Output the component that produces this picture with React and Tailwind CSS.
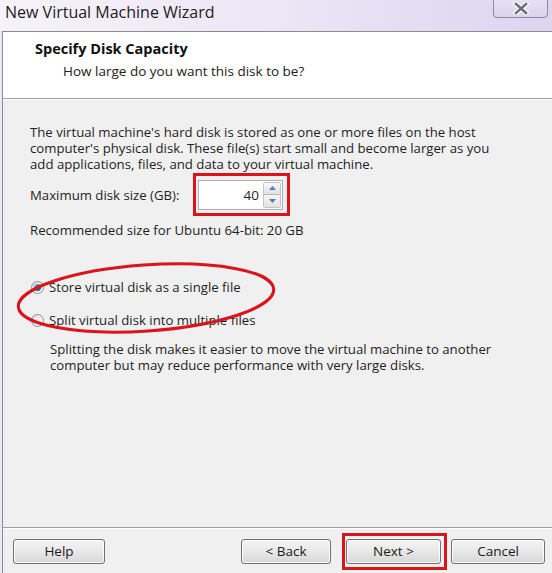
import React from 'react';

const font = { fontFamily: '"Open Sans", "Noto Sans", sans-serif' };

function WinButton({ children, className = '' }) {
  return (
    <div
      className={`h-[25px] flex items-center justify-center rounded-[3px] border border-[#707070] bg-gradient-to-b from-[#f4f4f4] via-[#e8e8e8] to-[#d6d6d6] text-[13.5px] text-[#1a1a1a] shadow-[inset_0_0_0_1px_#fcfcfc] ${className}`}
    >
      {children}
    </div>
  );
}

function Radio({ checked }) {
  return (
    <div className="w-[13px] h-[13px] rounded-full border border-[#8e8f8f] bg-gradient-to-br from-[#dcdcdc] to-[#fbfbfb] flex items-center justify-center">
      {checked && (
        <div className="w-[7px] h-[7px] rounded-full bg-gradient-to-br from-[#8cc3ec] via-[#2c6fb3] to-[#1b4f8a]" />
      )}
    </div>
  );
}

function CloseButton() {
  return (
    <div className="w-[55px] h-[19px] mt-[-1px] mr-[4px] rounded-b-[4px] border border-[#8d8aa6] bg-gradient-to-b from-[#e6e2f4] to-[#d9d3ee] flex items-center justify-center">
      <svg width="16" height="13" viewBox="0 0 16 13">
        <path d="M3 2 L13 11 M13 2 L3 11" stroke="#ffffff" strokeWidth="5" strokeLinecap="square" />
        <path d="M3 2 L13 11 M13 2 L3 11" stroke="#6f6f7c" strokeWidth="2.6" strokeLinecap="square" />
      </svg>
    </div>
  );
}

export default function App() {
  return (
    <div className="w-[552px] h-[573px] overflow-hidden bg-[#ece8f6] flex flex-col" style={font}>
      {/* title bar */}
      <div className="h-[31px] shrink-0 flex items-start justify-between bg-gradient-to-r from-[#f6f2f9] via-[#ece6f6] to-[#dcd5f0]">
        <div className="pl-[5px] pt-[1px] text-[16px] leading-[22px] text-[#1c1c1c]">New Virtual Machine Wizard</div>
        <CloseButton />
      </div>

      {/* window */}
      <div className="flex-1 ml-[2px] border-l border-t border-[#8c8c8c] flex flex-col bg-[#f0f0f0]">
        {/* header */}
        <div className="h-[67px] shrink-0 bg-white border-b border-[#a0a0a0] pl-[32px] pt-[8px]">
          <div className="text-[14.5px] leading-[18px] font-bold text-[#111]">Specify Disk Capacity</div>
          <div className="pl-[28px] mt-[4px] text-[13.5px] leading-[18px] text-[#222]">How large do you want this disk to be?</div>
        </div>

        {/* body */}
        <div className="relative flex-1 border-t border-white pl-[27px] pt-[24px] text-[13.2px] leading-[16px] text-[#1e1e1e] whitespace-nowrap">
          <p>
            The virtual machine's hard disk is stored as one or more files on the host
            <br />
            computer's physical disk. These file(s) start small and become larger as you
            <br />
            add applications, files, and data to your virtual machine.
          </p>

          <div className="flex items-center mt-[1px]">
            <span className="w-[163px]">Maximum disk size (GB):</span>
            <div className="w-[97px] h-[43px] border-[3px] border-[#d9141b] flex items-center pl-[2px]">
              <div className="w-[85px] h-[30px] flex border border-[#abadb3] bg-white">
                <div className="flex-1 flex items-center justify-end pr-[4px] text-[13.5px]">40</div>
                <div className="w-[18px] my-[1px] mr-[1px] flex flex-col border border-[#c4c4c4] rounded-[2px]">
                  <div className="flex-1 flex items-center justify-center bg-gradient-to-b from-[#f6f6f6] to-[#e2e2e2] border-b border-[#b8b8b8]">
                    <svg width="7" height="4" viewBox="0 0 7 4"><path d="M0 4 L3.5 0 L7 4 Z" fill="#4f7fb8" /></svg>
                  </div>
                  <div className="flex-1 flex items-center justify-center bg-gradient-to-b from-[#f6f6f6] to-[#e2e2e2]">
                    <svg width="7" height="4" viewBox="0 0 7 4"><path d="M0 0 L3.5 4 L7 0 Z" fill="#4f7fb8" /></svg>
                  </div>
                </div>
              </div>
            </div>
          </div>

          <p className="mt-[6px]">Recommended size for Ubuntu 64-bit: 20 GB</p>

          <div className="flex items-center gap-[5px] mt-[41px] pl-[1px]">
            <Radio checked />
            <span>Store virtual disk as a single file</span>
          </div>
          <div className="flex items-center gap-[5px] mt-[17px] pl-[1px]">
            <Radio />
            <span>Split virtual disk into multiple files</span>
          </div>
          <p className="mt-[13px] pl-[20px]">
            Splitting the disk makes it easier to move the virtual machine to another
            <br />
            computer but may reduce performance with very large disks.
          </p>

          {/* red annotation ellipse */}
          <svg className="absolute left-[8px] top-[158px] pointer-events-none" width="275" height="84" viewBox="0 0 275 84">
            <ellipse cx="135" cy="40" rx="128" ry="33" transform="rotate(-4 135 40)" fill="none" stroke="#d9141b" strokeWidth="3" />
          </svg>
        </div>

        {/* footer */}
        <div className="h-[46px] shrink-0 border-t border-[#a0a0a0] flex items-start">
          <div className="w-full h-full border-t border-white flex items-start">
            <WinButton className="w-[92px] ml-[10px] mt-[10px]">Help</WinButton>
            <div className="flex-1" />
            <WinButton className="w-[90px] mt-[10px]">&lt; Back</WinButton>
            <div className="ml-[11px] mt-[4px] w-[105px] h-[37px] border-[3px] border-[#d9141b] pt-[3px] pl-[1px]">
              <WinButton className="w-[95px]">Next &gt;</WinButton>
            </div>
            <WinButton className="w-[94px] ml-[4px] mr-[7px] mt-[10px]">Cancel</WinButton>
          </div>
        </div>
      </div>
    </div>
  );
}
